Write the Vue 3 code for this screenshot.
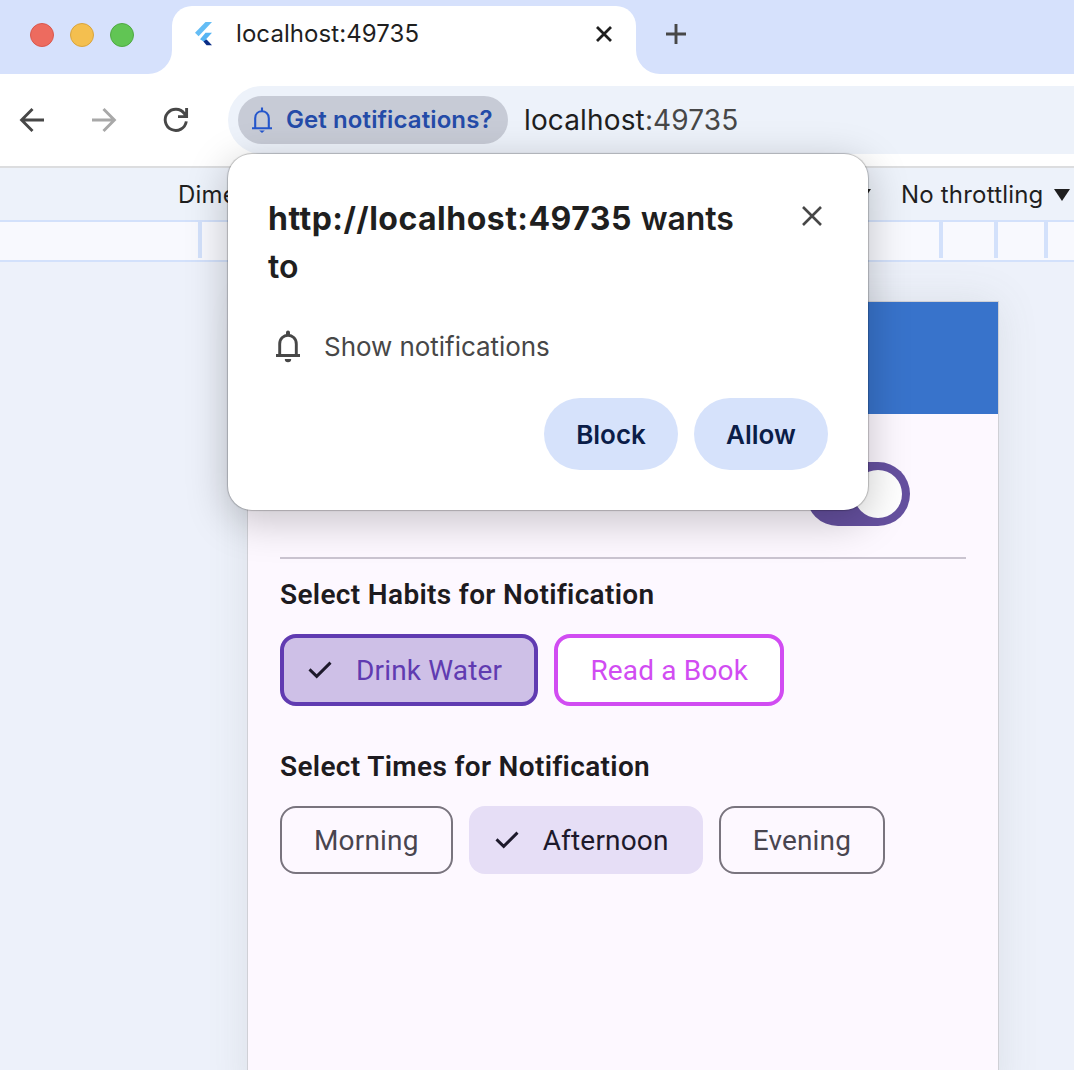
<script setup>
const lights = ['red', 'yellow', 'green']
const ticks = [
  { gap: 198 }, { gap: 737 }, { gap: 51 }, { gap: 46 },
]
const habits = [
  { name: 'Drink Water', kind: 'water', checked: true },
  { name: 'Read a Book', kind: 'book', checked: false },
]
const times = [
  { name: 'Morning', kind: 'morning', checked: false },
  { name: 'Afternoon', kind: 'afternoon', checked: true },
  { name: 'Evening', kind: 'evening', checked: false },
]
</script>

<template>
  <div class="browser">
    <header class="strip">
      <div class="strip-left">
        <i v-for="c in lights" :key="c" class="light" :class="c"></i>
      </div>
      <div class="tab-slot">
        <div class="tab">
          <svg class="flutter" width="18" height="24" viewBox="0 0 18 24">
            <path d="M11.5 0H18L4.6 14.2 1 10.8Z" fill="#64bdf5" />
            <path d="M11.5 10.8H18L12 17.2 15.5 21 12 21 6 17.2Z" fill="#55b4f3" />
            <path d="M9.4 19.6 12.5 17.4 18 23.2H12.6Z" fill="#0a2c85" />
          </svg>
          <span class="tab-title">localhost:49735</span>
          <svg class="tab-close" width="16" height="16" viewBox="0 0 16 16"><path d="M1 1 15 15M15 1 1 15" stroke="#1f1f1f" stroke-width="2.8" /></svg>
        </div>
      </div>
      <div class="strip-right">
        <svg width="20" height="20" viewBox="0 0 20 20"><path d="M10 0V20M0 10H20" stroke="#474747" stroke-width="2.9" /></svg>
      </div>
    </header>

    <div class="toolbar">
      <svg class="nav back" width="24" height="24" viewBox="0 0 24 24"><path d="M24 12H2M12.5 1 1.6 12 12.5 23" fill="none" stroke="#474747" stroke-width="2.9" /></svg>
      <svg class="nav forward" width="24" height="24" viewBox="0 0 24 24"><path d="M0 12H22M11.5 1 22.4 12 11.5 23" fill="none" stroke="#a8a8a8" stroke-width="2.9" /></svg>
      <svg class="nav reload" width="24" height="24" viewBox="0 0 24 24"><path d="M22.3 13.4A10.6 10.6 0 1 1 20.4 5.6L22.4 8.6M22.6 0V8.6H14" fill="none" stroke="#474747" stroke-width="2.9" /></svg>
      <div class="omnibox">
        <div class="chip-request">
          <svg width="20" height="26" viewBox="0 0 20 26"><path d="M0 21.2H20M3.2 21V11.2C3.2 2 16.8 2 16.8 11.2V21M10 0.6V4.2" fill="none" stroke="#2456cc" stroke-width="2.1" /><path d="M7.2 23.6H12.8L10 26Z" fill="#2456cc" /></svg>
          <span>Get notifications?</span>
        </div>
        <span class="url">localhost<em>:49735</em></span>
      </div>
    </div>

    <div class="device-bar">
      <span class="dims">Dime</span>
      <div class="device-right">
        <svg class="arrow" width="16" height="12" viewBox="0 0 16 12"><path d="M0 0H16L8 12Z" fill="#1f1f1f" /></svg>
        <span class="throttle">No throttling</span>
        <svg class="arrow" width="16" height="12" viewBox="0 0 16 12"><path d="M0 0H16L8 12Z" fill="#1f1f1f" /></svg>
      </div>
    </div>
    <div class="ruler">
      <i v-for="(t, n) in ticks" :key="n" class="tick" :style="{ marginLeft: t.gap + 'px' }"></i>
    </div>

    <main class="stage">
      <div class="phone">
        <div class="app-bar"></div>
        <div class="content">
          <div class="switch-row"><div class="switch"><i></i></div></div>
          <hr />
          <h2 class="h-habits">Select Habits for Notification</h2>
          <div class="chips habits">
            <div v-for="h in habits" :key="h.name" class="chip" :class="h.kind">
              <svg v-if="h.checked" class="check" width="24" height="18" viewBox="0 0 24 18"><path d="M1.5 8.4 8.7 15.4 22.5 1.6" fill="none" stroke="#1d192b" stroke-width="2.9" /></svg>
              <span>{{ h.name }}</span>
            </div>
          </div>
          <h2 class="h-times">Select Times for Notification</h2>
          <div class="chips times">
            <div v-for="t in times" :key="t.name" class="chip" :class="t.kind">
              <svg v-if="t.checked" class="check" width="24" height="18" viewBox="0 0 24 18"><path d="M1.5 8.4 8.7 15.4 22.5 1.6" fill="none" stroke="#1d192b" stroke-width="2.9" /></svg>
              <span>{{ t.name }}</span>
            </div>
          </div>
        </div>
      </div>
    </main>

    <section class="dialog">
      <div class="dialog-head">
        <div class="dialog-title"><b>http://localhost:49735</b> <span class="wants">wants</span><br /><span class="wants">to</span></div>
        <svg width="20" height="20" viewBox="0 0 20 20"><path d="M1 1 19 19M19 1 1 19" stroke="#474747" stroke-width="2.6" /></svg>
      </div>
      <div class="permission">
        <svg width="24" height="32" viewBox="0 0 24 32"><path d="M0 25.5H24M3.7 25V14C3.7 2.4 20.3 2.4 20.3 14V25" fill="none" stroke="#474747" stroke-width="2.9" /><path d="M10 5V2.4a2 2 0 0 1 4 0V5ZM8.8 29H15.2A3.2 3.2 0 0 1 8.8 29Z" fill="#474747" /></svg>
        <span>Show notifications</span>
      </div>
      <div class="actions">
        <button class="block"><span>Block</span></button>
        <button class="allow"><span>Allow</span></button>
      </div>
    </section>
  </div>
</template>

<style>
body { margin: 0; overflow: hidden; }
</style>

<style scoped>
* { box-sizing: border-box; }
.browser { position: relative; width: 1074px; height: 1070px; overflow: hidden; display: flex; flex-direction: column; background: #edf1fa; font-family: Inter, "Liberation Sans", sans-serif; color: #1f1f1f; white-space: nowrap; }
svg { display: block; flex: none; overflow: visible; }
.strip { display: flex; height: 74px; flex: none; background: #fff; }
.strip-left { width: 172px; background: #d6e1fc; border-bottom-right-radius: 24px; display: flex; gap: 16px; padding: 23px 0 0 30px; }
.light { width: 24px; height: 24px; border-radius: 50%; border: 1px solid; }
.red { background: #ed6b5f; border-color: #d9584d; }
.yellow { background: #f4bf4f; border-color: #d9a43d; }
.green { background: #61c554; border-color: #4fa943; }
.tab-slot { width: 464px; background: #d6e1fc; padding-top: 6px; }
.tab { height: 68px; background: #fff; border-radius: 20px 20px 0 0; display: flex; align-items: flex-start; padding-left: 22px; }
.flutter { margin-top: 16px; }
.tab-title { margin: 12px 0 0 24px; width: 360px; font-size: 24px; line-height: 32px; letter-spacing: .08px; }
.tab-close { margin-top: 20px; }
.strip-right { flex: 1; background: #d6e1fc; border-bottom-left-radius: 24px; padding: 24px 0 0 30px; }
.toolbar { height: 94px; flex: none; background: #fff; border-bottom: 2px solid #dcdddf; display: flex; padding-top: 12px; }
.nav { margin-top: 22px; }
.back { margin-left: 20px; }
.forward { margin-left: 48px; }
.reload { margin-left: 48px; }
.omnibox { margin-left: 40px; flex: 1; height: 68px; border-radius: 34px 0 0 34px; background: #edf2fa; display: flex; align-items: center; padding-left: 10px; }
.chip-request { width: 270px; height: 48px; border-radius: 24px; background: #c7cbd6; color: #244ba8; display: flex; align-items: center; padding-left: 14px; font-size: 24px; font-weight: 580; letter-spacing: .1px; }
.chip-request span { margin: -1px 0 0 14px; }
.url { margin-left: 16px; font-size: 28px; letter-spacing: .14px; }
.url em { font-style: normal; color: #474747; }
.device-bar { height: 54px; flex: none; border-bottom: 2px solid #d3e1fb; background: #edf2fa; display: flex; align-items: center; justify-content: space-between; padding: 0 4px 0 178px; font-size: 24px; letter-spacing: .2px; }
.device-right { display: flex; align-items: center; }
.arrow { margin-top: 2px; }
.throttle { margin: 0 11px 0 30px; width: 142px; }
.ruler { height: 40px; flex: none; background: #f8f9fe; border-bottom: 2px solid #d3e1fb; display: flex; }
.tick { width: 4px; height: 36px; background: #d3e1fb; }
.stage { flex: 1; padding: 40px 0 0 248px; }
.phone { width: 750px; height: 800px; background: #fdf8ff; box-shadow: 0 0 0 1px #cfd0d6, 0 0 40px rgba(90, 100, 90, .12); font-family: Roboto, sans-serif; }
.app-bar { height: 112px; background: #3873cb; }
.content { padding: 0 32px; }
.switch-row { display: flex; justify-content: flex-end; padding: 48px 56px 0 0; height: 143px; }
.switch { width: 104px; height: 64px; border-radius: 32px; background: #65509f; display: flex; justify-content: flex-end; padding: 8px; }
.switch i { width: 48px; height: 48px; border-radius: 50%; background: #fff; }
hr { margin: 0; border: 0; height: 2px; background: #cac4d0; }
h2 { margin: 0; font-size: 28px; line-height: 40px; font-weight: 560; letter-spacing: .34px; color: #1d1b20; }
.h-habits { margin-top: 16px; }
.h-times { margin-top: 41px; }
.chips { display: flex; gap: 16px; margin-top: 19px; }
.chip { display: flex; align-items: center; border-radius: 16px; font-size: 28px; height: 68px; letter-spacing: .17px; }
.water { width: 258.4px; height: 72px; border: 4px solid #603bb1; background: #cec0e7; color: #603bb1; padding-left: 24px; }
.book { width: 230px; height: 72px; border: 4px solid #d14cf2; background: #fff; color: #d14cf2; padding-left: 32px; }
.check { margin-right: 24px; }
.morning, .evening { border: 2px solid #79747e; color: #49454f; padding-left: 32px; }
.morning { width: 172.7px; }
.afternoon { width: 234px; background: #e6def6; color: #1d192b; padding-left: 26px; }
.evening { width: 166.6px; }
.dialog { position: absolute; left: 228px; top: 154px; width: 640px; height: 356px; border-radius: 24px; background: #fff; box-shadow: 0 0 1px 1px rgba(0, 0, 0, .22), 0 10px 40px 2px rgba(0, 0, 0, .21); padding: 40px; }
.dialog-head { display: flex; justify-content: space-between; height: 96px; padding-right: 6px; }
.dialog-head svg { margin-top: 12px; }
.dialog-title { font-size: 32px; line-height: 48px; padding-top: 1px; }
.dialog-title b { font-weight: 700; letter-spacing: .47px; }
.wants { font-weight: 580; letter-spacing: -.1px; }
.permission { display: flex; align-items: center; height: 32px; margin: 40px 0 0 8px; font-size: 26px; color: #474747; }
.permission span { margin-left: 24px; letter-spacing: -.05px; }
.actions { display: flex; justify-content: flex-end; gap: 16px; margin-top: 36px; }
button { width: 134px; height: 72px; border: 0; border-radius: 36px; background: #d6e2fb; color: #0b1d48; font: 600 26px Inter, "Liberation Sans", sans-serif; padding: 0; }
</style>
